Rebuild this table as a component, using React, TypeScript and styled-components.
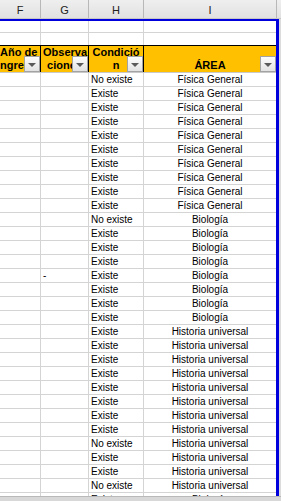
import React from "react";
import styled, { createGlobalStyle } from "styled-components";

const GlobalStyle = createGlobalStyle`
  html, body {
    margin: 0;
    padding: 0;
    overflow: hidden;
    background: #ffffff;
  }
`;

const COLS = "41px 48px 55px 132px";
const GRID = "#d4d4d4";

const Sheet = styled.div`
  width: 281px;
  height: 501px;
  display: flex;
  flex-direction: column;
  overflow: hidden;
  background: #ffffff;
  font-family: "Liberation Sans", Arial, sans-serif;
  color: #000;
`;

const LetterBar = styled.div`
  display: grid;
  grid-template-columns: 41px 48px 55px 133px 4px;
  height: 19px;
  box-sizing: border-box;
  border-bottom: 1px solid #c6c6c6;
  background: linear-gradient(#efefef, #e1e1e1);
`;

const Letter = styled.div<{ $last?: boolean }>`
  display: flex;
  align-items: center;
  justify-content: center;
  padding-top: 2px;
  font-size: 11px;
  color: #222;
  border-right: ${(p) => (p.$last ? "none" : "1px solid #b8b8b8")};
`;

const Body = styled.div`
  flex: 1;
  display: flex;
  min-height: 0;
`;

const Frame = styled.div`
  width: 279px;
  box-sizing: border-box;
  border-top: 2px solid #0000dc;
  border-right: 3px solid #0000dc;
  overflow: hidden;
`;

const SideStrip = styled.div`
  width: 2px;
  background: #dcdcdc;
`;

const Row = styled.div<{ $h: number; $line?: boolean }>`
  display: grid;
  grid-template-columns: ${COLS};
  height: ${(p) => p.$h}px;
  box-sizing: border-box;
  border-bottom: ${(p) => (p.$line ? `1px solid ${GRID}` : "none")};
`;

const Cell = styled.div<{ $center?: boolean; $last?: boolean }>`
  display: flex;
  align-items: center;
  justify-content: ${(p) => (p.$center ? "center" : "flex-start")};
  padding: 0 2px;
  font-size: 10px;
  line-height: 13px;
  white-space: nowrap;
  overflow: hidden;
  border-right: ${(p) => (p.$last ? "none" : `1px solid ${GRID}`)};
`;

const HeadRow = styled.div`
  display: grid;
  grid-template-columns: ${COLS};
  height: 28px;
  box-sizing: border-box;
  border-top: 1px solid #000;
  border-bottom: 1px solid #c9c9c9;
  background: #ffc000;
`;

const HeadCell = styled.div<{ $last?: boolean }>`
  position: relative;
  display: flex;
  flex-direction: column;
  justify-content: flex-end;
  overflow: hidden;
  font-size: 11px;
  font-weight: bold;
  line-height: 13px;
  text-align: center;
  border-right: ${(p) => (p.$last ? "none" : "1px solid #000")};
`;

const HeadLine = styled.span<{ $shift?: number; $left?: boolean }>`
  display: block;
  white-space: nowrap;
  text-align: ${(p) => (p.$left ? "left" : "center")};
  margin-left: ${(p) => p.$shift ?? 0}px;
`;

const FilterButton = styled.div`
  position: absolute;
  right: 0;
  bottom: 0;
  width: 16px;
  height: 16px;
  box-sizing: border-box;
  border: 1px solid #a3a3a3;
  background: linear-gradient(#fdfdfd, #e2e2e2);
  display: flex;
  align-items: center;
  justify-content: center;

  &::after {
    content: "";
    width: 0;
    height: 0;
    margin-top: 1px;
    border-left: 4px solid transparent;
    border-right: 4px solid transparent;
    border-top: 4px solid #5a5a5a;
  }
`;

const BottomBar = styled.div`
  height: 5px;
  box-sizing: border-box;
  border-top: 1px solid #b9b9b9;
  background: #d8d8d8;
`;

const FG = "Física General";
const BIO = "Biología";
const HU = "Historia universal";

type Item = { obs: string; cond: string; area: string };

const rep = (n: number, cond: string, area: string): Item[] =>
  Array.from({ length: n }, () => ({ obs: "", cond, area }));

const data: Item[] = [
  { obs: "", cond: "No existe", area: FG },
  ...rep(9, "Existe", FG),
  { obs: "", cond: "No existe", area: BIO },
  ...rep(3, "Existe", BIO),
  { obs: "-", cond: "Existe", area: BIO },
  ...rep(3, "Existe", BIO),
  ...rep(8, "Existe", HU),
  { obs: "", cond: "No existe", area: HU },
  ...rep(2, "Existe", HU),
  { obs: "", cond: "No existe", area: HU },
  { obs: "", cond: "Existe", area: BIO },
];

const EmptyRow: React.FC<{ h: number; line?: boolean }> = ({ h, line }) => (
  <Row $h={h} $line={line}>
    <Cell />
    <Cell />
    <Cell />
    <Cell $last />
  </Row>
);

const App: React.FC = () => (
  <>
    <GlobalStyle />
    <Sheet>
      <LetterBar>
        <Letter>F</Letter>
        <Letter>G</Letter>
        <Letter>H</Letter>
        <Letter>I</Letter>
        <Letter $last />
      </LetterBar>
      <Body>
        <Frame>
          <EmptyRow h={12} line />
          <EmptyRow h={12} />
          <HeadRow>
            <HeadCell>
              <HeadLine $left>Año de</HeadLine>
              <HeadLine $left $shift={-3}>
                ingreso
              </HeadLine>
              <FilterButton />
            </HeadCell>
            <HeadCell>
              <HeadLine $left $shift={2}>
                Observa
              </HeadLine>
              <HeadLine>ciones</HeadLine>
              <FilterButton />
            </HeadCell>
            <HeadCell>
              <HeadLine>Condició</HeadLine>
              <HeadLine>n</HeadLine>
              <FilterButton />
            </HeadCell>
            <HeadCell $last>
              <HeadLine>ÁREA</HeadLine>
              <FilterButton />
            </HeadCell>
          </HeadRow>
          {data.map((d, i) => (
            <Row key={i} $h={14} $line>
              <Cell />
              <Cell>{d.obs}</Cell>
              <Cell>{d.cond}</Cell>
              <Cell $center $last>
                {d.area}
              </Cell>
            </Row>
          ))}
        </Frame>
        <SideStrip />
      </Body>
      <BottomBar />
    </Sheet>
  </>
);

export default App;
